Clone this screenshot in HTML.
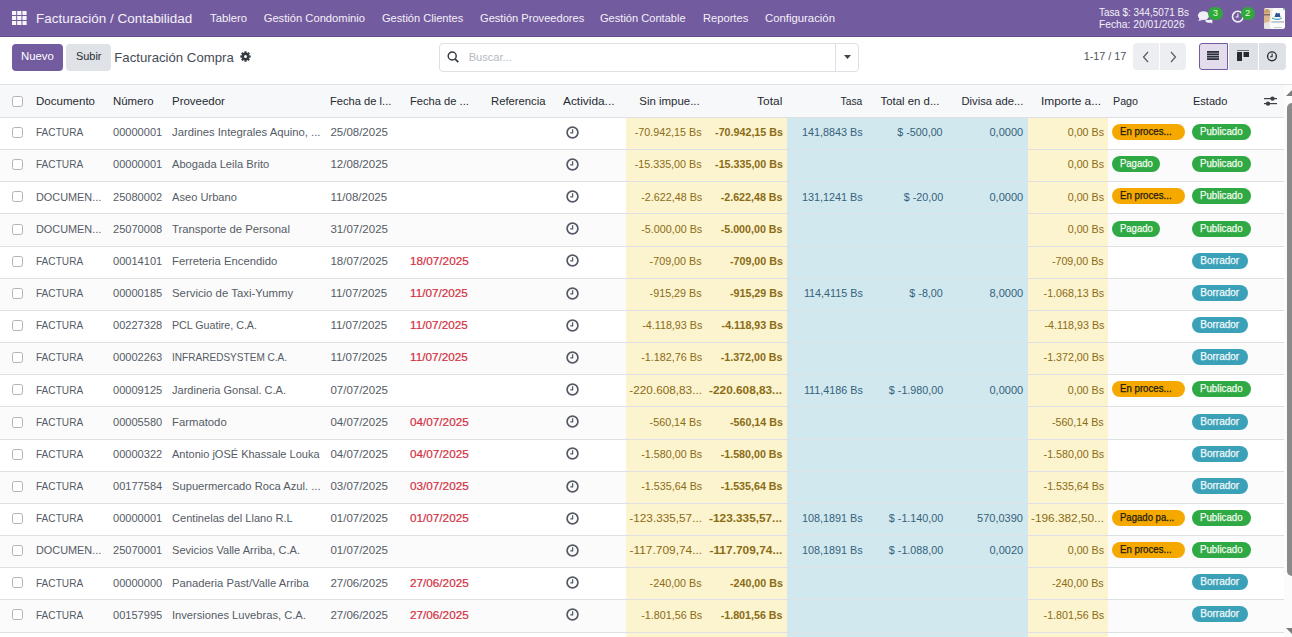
<!DOCTYPE html>
<html><head><meta charset="utf-8"><title>Facturación Compra</title>
<style>
*{box-sizing:border-box;margin:0;padding:0}
html,body{width:1292px;height:637px;overflow:hidden;background:#fff;font-family:"Liberation Sans",sans-serif;position:relative}
.t{position:absolute;white-space:nowrap}
.nav{position:absolute;left:0;top:0;width:1292px;height:37px;background:#735b9f;border-bottom:1px solid #5f4b86}
.nt{color:#f4f1f8}
.btn{position:absolute;border-radius:4px}
.hdr{position:absolute;left:0;top:84px;width:1292px;height:34px;border-top:1px solid #dde0e4;border-bottom:1px solid #dde0e4}
.hdrbg{position:absolute;left:0;top:85px;width:1284px;height:32px;background:#f7f8fa}
.ht{color:#252a31}
.row{position:absolute;left:0;width:1284px}
.rl{position:absolute;left:0;width:1284px;height:1px;background:#dde0e4}
.cb{position:absolute;left:12px;width:11px;height:11px;border:1px solid #b3b3b3;border-radius:2.5px;background:#fff}
.rt{color:#555b65}
.red{color:#d32f3f}
.yt{color:#8a6c14}
.bt{color:#34627a}
.badge{position:absolute;height:16px;border-radius:8px}
.bx{-webkit-text-stroke:0.25px currentColor}
.b-ot{color:#1d1a10}.b-gt{color:#f4fbef}.b-bt{color:#f2f9fb}
.b-o{background:#f5a900}
.b-g{background:#2fa944}
.b-b{background:#3aa1b8}
</style></head><body>

<div class="nav"></div><div style="position:absolute;left:0;top:35px;width:1292px;height:1px;background:#785fa4"></div>
<svg style="position:absolute;left:12px;top:11px" width="15" height="14" viewBox="0 0 15 14"><rect x="0.0" y="0.0" width="4.2" height="4" fill="#f7f5fb"/><rect x="0.0" y="5.0" width="4.2" height="4" fill="#f7f5fb"/><rect x="0.0" y="10.0" width="4.2" height="4" fill="#f7f5fb"/><rect x="5.2" y="0.0" width="4.2" height="4" fill="#f7f5fb"/><rect x="5.2" y="5.0" width="4.2" height="4" fill="#f7f5fb"/><rect x="5.2" y="10.0" width="4.2" height="4" fill="#f7f5fb"/><rect x="10.4" y="0.0" width="4.2" height="4" fill="#f7f5fb"/><rect x="10.4" y="5.0" width="4.2" height="4" fill="#f7f5fb"/><rect x="10.4" y="10.0" width="4.2" height="4" fill="#f7f5fb"/></svg>
<div class="t nt" style="left:36.00px;top:12.16px;font-size:13.4px;line-height:13.4px;transform:scaleX(1.0046);transform-origin:left center;">Facturación / Contabilidad</div>
<div class="t nt" style="left:210.00px;top:12.82px;font-size:11.2px;line-height:11.2px;transform:scaleX(1.0072);transform-origin:left center;">Tablero</div>
<div class="t nt" style="left:263.70px;top:12.82px;font-size:11.2px;line-height:11.2px;">Gestión Condominio</div>
<div class="t nt" style="left:381.50px;top:12.82px;font-size:11.2px;line-height:11.2px;transform:scaleX(0.9894);transform-origin:left center;">Gestión Clientes</div>
<div class="t nt" style="left:479.50px;top:12.82px;font-size:11.2px;line-height:11.2px;transform:scaleX(0.9923);transform-origin:left center;">Gestión Proveedores</div>
<div class="t nt" style="left:600.30px;top:12.82px;font-size:11.2px;line-height:11.2px;transform:scaleX(0.9903);transform-origin:left center;">Gestión Contable</div>
<div class="t nt" style="left:703.00px;top:12.82px;font-size:11.2px;line-height:11.2px;transform:scaleX(0.9967);transform-origin:left center;">Reportes</div>
<div class="t nt" style="left:764.70px;top:12.82px;font-size:11.2px;line-height:11.2px;transform:scaleX(1.0130);transform-origin:left center;">Configuración</div>
<div class="t nt" style="left:1099.00px;top:7.31px;font-size:10.5px;line-height:10.5px;transform:scaleX(0.9401);transform-origin:left center;">Tasa $: 344,5071 Bs</div>
<div class="t nt" style="left:1099.00px;top:18.91px;font-size:10.5px;line-height:10.5px;transform:scaleX(0.9775);transform-origin:left center;">Fecha: 20/01/2026</div>
<svg style="position:absolute;left:1196px;top:9px" width="18" height="15" viewBox="0 0 18 15"><path d="M9.5 10.6 C12 11.2 14.2 11 15.3 10.6 C16.6 11.3 17 12.4 16 13.2 L16.8 14.4 L14.4 13.7 C12.8 14.1 10.6 13.7 9.5 12.6Z" fill="#f1eef6"/><ellipse cx="7.5" cy="6.6" rx="5.6" ry="4.4" fill="#f1eef6"/><path d="M3.6 9.6 L2.3 12 L6.6 10.9Z" fill="#f1eef6"/></svg>
<div style="position:absolute;left:1208px;top:7px;width:14.6px;height:13.2px;border-radius:7px;background:#2ea93c;color:#eef5d4;font-size:9.5px;line-height:12px;text-align:center">3</div>
<svg style="position:absolute;left:1231px;top:10px" width="14" height="14" viewBox="0 0 14 14"><circle cx="6.8" cy="6.6" r="5.3" fill="none" stroke="#f1eef6" stroke-width="1.6"/><path d="M6.9 3.6V7H4.6" fill="none" stroke="#f1eef6" stroke-width="1.1"/></svg>
<div style="position:absolute;left:1240.5px;top:7px;width:14.4px;height:13.2px;border-radius:7px;background:#2ea93c;color:#eef5d4;font-size:9.5px;line-height:12px;text-align:center">2</div>
<svg style="position:absolute;left:1264px;top:8px" width="21" height="21" viewBox="0 0 21 21">
<defs><clipPath id="av"><rect width="21" height="21" rx="2.5"/></clipPath></defs>
<g clip-path="url(#av)">
<rect width="21" height="21" fill="#fbfbfc"/>
<path d="M0 0H9L5.5 21H0Z" fill="#ece9e6"/>
<path d="M0 3 C1 1 4 1 5.5 2.5 L6 5 L5.5 13 L3 16 L0 16Z" fill="#d9b48f"/>
<path d="M0 2.5 C1 0.5 5 0.5 6 3 L5.6 5 L0 5Z" fill="#c7a36a"/>
<rect x="0" y="6.2" width="6" height="1.2" fill="#6b5a4e"/>
<path d="M0 15 L4 14 L7 21 H0Z" fill="#e6e3e1"/>
<path d="M10.5 9 L12 4.8 L14 5.6 L15.5 4.8 L16.5 9Z" fill="#2d4f8e"/>
<path d="M8.5 9.5 Q13 12 18 9.5 L17 11 Q13 13 9.5 11Z" fill="#3b9ee0"/>
<rect x="8" y="9.8" width="2" height="1.2" fill="#5bc86a"/>
<rect x="15.8" y="9.8" width="2" height="1.2" fill="#5bc86a"/>
<rect x="7.5" y="13.5" width="12.5" height="0.9" fill="#8c8f96"/>
<rect x="10" y="19" width="8" height="0.7" fill="#b6b8bd"/>
<rect x="19" y="0.5" width="1.6" height="1.6" fill="#58d05f"/>
</g></svg>
<div class="btn" style="left:12px;top:44px;width:51px;height:27px;background:#735b9f"></div>
<div class="t " style="left:20.90px;top:51.03px;font-size:11.3px;line-height:11.3px;transform:scaleX(1.0071);transform-origin:left center;color:#fff">Nuevo</div>
<div class="btn" style="left:66px;top:44px;width:45px;height:27px;background:#dfe2e6"></div>
<div class="t " style="left:75.50px;top:51.03px;font-size:11.3px;line-height:11.3px;transform:scaleX(0.9664);transform-origin:left center;color:#262b33">Subir</div>
<div class="t " style="left:114.30px;top:50.83px;font-size:13.2px;line-height:13.2px;color:#454b55">Facturación Compra</div>
<svg style="position:absolute;left:239.7px;top:51.4px" width="11" height="11" viewBox="0 0 11 11"><g transform="translate(5.5 5.5)" fill="#363b44"><circle r="3.9"/><rect x="-1.1" y="-5.2" width="2.2" height="10.4"/><rect x="-1.1" y="-5.2" width="2.2" height="10.4" transform="rotate(45)"/><rect x="-1.1" y="-5.2" width="2.2" height="10.4" transform="rotate(90)"/><rect x="-1.1" y="-5.2" width="2.2" height="10.4" transform="rotate(135)"/></g><circle cx="5.5" cy="5.5" r="1.5" fill="#fff"/></svg>
<div style="position:absolute;left:439px;top:43px;width:420px;height:28.5px;border:1px solid #dde0e4;border-radius:4px;background:#fff"></div>
<div style="position:absolute;left:835px;top:43px;width:1px;height:28.5px;background:#dde0e4"></div>
<svg style="position:absolute;left:447px;top:51px" width="13" height="12" viewBox="0 0 13 12"><circle cx="5.2" cy="5" r="4" fill="none" stroke="#353a42" stroke-width="1.45"/><path d="M8 7.9L11.3 11.2" stroke="#353a42" stroke-width="1.7"/></svg>
<div class="t " style="left:468.70px;top:52.00px;font-size:11.1px;line-height:11.1px;color:#b4b9c2">Buscar...</div>
<svg style="position:absolute;left:843.5px;top:55px" width="7" height="4" viewBox="0 0 7 4"><path d="M0 0H7L3.5 4Z" fill="#3f444c"/></svg>
<div class="t " style="left:1083.70px;top:51.16px;font-size:10.8px;line-height:10.8px;color:#4d535c">1-17 / 17</div>
<div class="btn" style="left:1133px;top:43px;width:26px;height:27px;background:#eceef1;border-radius:4px 0 0 4px"></div>
<div class="btn" style="left:1160px;top:43px;width:26px;height:27px;background:#eceef1;border-radius:0 4px 4px 0"></div>
<svg style="position:absolute;left:1141px;top:51px" width="10" height="12" viewBox="0 0 10 12"><path d="M7 1L2.5 6L7 11" fill="none" stroke="#555b64" stroke-width="1.2"/></svg>
<svg style="position:absolute;left:1168px;top:51px" width="10" height="12" viewBox="0 0 10 12"><path d="M3 1L7.5 6L3 11" fill="none" stroke="#555b64" stroke-width="1.2"/></svg>
<div class="btn" style="left:1199px;top:43px;width:29px;height:27px;background:#e2dcec;border:1px solid #735b9f;border-radius:3px 0 0 3px"></div>
<div class="btn" style="left:1229px;top:43px;width:29px;height:27px;background:#dee1e6;border-radius:0"></div>
<div class="btn" style="left:1259px;top:43px;width:27px;height:27px;background:#dee1e6;border-radius:0 4px 4px 0"></div>
<svg style="position:absolute;left:1207.3px;top:51px" width="12" height="9" viewBox="0 0 12 9"><rect x="0" y="0" width="12" height="1.8" fill="#2a2f37"/><rect x="0" y="2.4" width="12" height="1.8" fill="#2a2f37"/><rect x="0" y="4.8" width="12" height="1.8" fill="#2a2f37"/><rect x="0" y="7.2" width="12" height="1.8" fill="#2a2f37"/></svg>
<svg style="position:absolute;left:1237px;top:50px" width="12" height="11" viewBox="0 0 12 11"><rect x="0" y="0" width="12" height="1" fill="#6a6f78"/><rect x="0" y="2" width="5" height="9" fill="#262b33"/><rect x="6.5" y="2" width="5.5" height="5" fill="#262b33"/></svg>
<svg style="position:absolute;left:1266px;top:51px" width="12" height="11" viewBox="0 0 12 11"><circle cx="6" cy="5.3" r="4.4" fill="none" stroke="#2a2f37" stroke-width="1.35"/><path d="M6.1 2.6V5.7H4" fill="none" stroke="#2a2f37" stroke-width="1.1"/></svg>
<div class="hdr"></div><div class="hdrbg"></div>
<div class="cb" style="top:96px"></div>
<div class="t ht" style="left:36.00px;top:96.27px;font-size:11.5px;line-height:11.5px;transform:scaleX(1.0032);transform-origin:left center;">Documento</div>
<div class="t ht" style="left:113.40px;top:96.27px;font-size:11.5px;line-height:11.5px;transform:scaleX(0.9925);transform-origin:left center;">Número</div>
<div class="t ht" style="left:171.70px;top:96.27px;font-size:11.5px;line-height:11.5px;transform:scaleX(0.9970);transform-origin:left center;">Proveedor</div>
<div class="t ht" style="left:330.40px;top:96.27px;font-size:11.5px;line-height:11.5px;transform:scaleX(0.9702);transform-origin:left center;">Fecha de l...</div>
<div class="t ht" style="left:410.40px;top:96.27px;font-size:11.5px;line-height:11.5px;transform:scaleX(0.9698);transform-origin:left center;">Fecha de ...</div>
<div class="t ht" style="left:490.90px;top:96.27px;font-size:11.5px;line-height:11.5px;transform:scaleX(0.9798);transform-origin:left center;">Referencia</div>
<div class="t ht" style="left:563.20px;top:96.27px;font-size:11.5px;line-height:11.5px;transform:scaleX(1.0330);transform-origin:left center;">Activida...</div>
<div class="t ht" style="left:1112.50px;top:96.27px;font-size:11.5px;line-height:11.5px;transform:scaleX(0.9310);transform-origin:left center;">Pago</div>
<div class="t ht" style="left:1192.60px;top:96.27px;font-size:11.5px;line-height:11.5px;transform:scaleX(0.9581);transform-origin:left center;">Estado</div>
<div class="t ht" style="right:592.30px;top:96.27px;font-size:11.5px;line-height:11.5px;transform:scaleX(0.9947);transform-origin:right center;">Sin impue...</div>
<div class="t ht" style="right:509.30px;top:96.27px;font-size:11.5px;line-height:11.5px;transform:scaleX(1.0375);transform-origin:right center;">Total</div>
<div class="t ht" style="right:429.30px;top:96.27px;font-size:11.5px;line-height:11.5px;transform:scaleX(0.8930);transform-origin:right center;">Tasa</div>
<div class="t ht" style="right:352.50px;top:96.27px;font-size:11.5px;line-height:11.5px;transform:scaleX(0.9907);transform-origin:right center;">Total en d...</div>
<div class="t ht" style="right:268.90px;top:96.27px;font-size:11.5px;line-height:11.5px;transform:scaleX(0.9767);transform-origin:right center;">Divisa ade...</div>
<div class="t ht" style="right:190.40px;top:96.27px;font-size:11.5px;line-height:11.5px;transform:scaleX(1.0350);transform-origin:right center;">Importe a...</div>
<svg style="position:absolute;left:1264px;top:95px" width="13" height="12" viewBox="0 0 13 12"><rect x="0" y="3" width="13" height="1.2" fill="#3a3f48"/><rect x="0" y="8" width="13" height="1.2" fill="#3a3f48"/><circle cx="8.5" cy="3.6" r="2.2" fill="#3a3f48"/><circle cx="4" cy="8.6" r="2.2" fill="#3a3f48"/></svg>
<div style="position:absolute;left:626px;top:118px;width:161px;height:519px;background:#fcf3cf"></div>
<div style="position:absolute;left:787px;top:118px;width:241px;height:519px;background:#d2e8ef"></div>
<div style="position:absolute;left:1028px;top:118px;width:80px;height:519px;background:#fcf3cf"></div>
<div class="rl" style="top:149px"></div>
<div class="cb" style="top:127px"></div>
<div class="t rt" style="left:36.00px;top:127.27px;font-size:11.5px;line-height:11.5px;transform:scaleX(0.8793);transform-origin:left center;">FACTURA</div>
<div class="t rt" style="left:113.00px;top:127.27px;font-size:11.5px;line-height:11.5px;transform:scaleX(0.9620);transform-origin:left center;">00000001</div>
<div class="t rt" style="left:172.00px;top:127.27px;font-size:11.5px;line-height:11.5px;transform:scaleX(0.9801);transform-origin:left center;">Jardines Integrales Aquino, ...</div>
<div class="t rt" style="left:330.40px;top:127.27px;font-size:11.5px;line-height:11.5px;">25/08/2025</div>
<div style="position:absolute;left:566px;top:125px;width:13px;height:13px"><svg width="13" height="13" viewBox="0 0 13 13"><circle cx="6.5" cy="6.5" r="5.4" fill="none" stroke="#545a64" stroke-width="1.7"/><path d="M6.6 3.3V6.9H4.3" fill="none" stroke="#545a64" stroke-width="1.3"/></svg></div>
<div class="t yt" style="right:590.00px;top:127.27px;font-size:11.5px;line-height:11.5px;transform:scaleX(0.9350);transform-origin:right center;">-70.942,15 Bs</div>
<div class="t yt" style="right:509.60px;top:127.27px;font-size:11.5px;line-height:11.5px;transform:scaleX(0.9300);transform-origin:right center;font-weight:bold">-70.942,15 Bs</div>
<div class="t bt" style="right:429.00px;top:127.27px;font-size:11.5px;line-height:11.5px;transform:scaleX(0.9380);transform-origin:right center;">141,8843 Bs</div>
<div class="t bt" style="right:349.00px;top:127.27px;font-size:11.5px;line-height:11.5px;transform:scaleX(0.9340);transform-origin:right center;">$ -500,00</div>
<div class="t bt" style="right:268.60px;top:127.27px;font-size:11.5px;line-height:11.5px;transform:scaleX(0.9580);transform-origin:right center;">0,0000</div>
<div class="t yt" style="right:188.00px;top:127.27px;font-size:11.5px;line-height:11.5px;transform:scaleX(0.9300);transform-origin:right center;">0,00 Bs</div>
<div class="badge b-o" style="left:1112px;top:124px;width:73px"></div>
<div class="t bx b-ot" style="left:1120.30px;top:127.23px;font-size:10px;line-height:10px;transform:scaleX(0.9670);transform-origin:left center;">En proces...</div>
<div class="badge b-g" style="left:1192px;top:124px;width:59px"></div>
<div class="t bx b-gt" style="left:1200.30px;top:127.23px;font-size:10px;line-height:10px;transform:scaleX(0.9699);transform-origin:left center;">Publicado</div>
<div class="row" style="top:150px;height:31px;background:#fbfbfc;left:0;width:626px"></div>
<div class="row" style="top:150px;height:31px;background:#fbfbfc;left:1108px;width:176px"></div>
<div class="rl" style="top:181px"></div>
<div class="cb" style="top:159px"></div>
<div class="t rt" style="left:36.00px;top:159.27px;font-size:11.5px;line-height:11.5px;transform:scaleX(0.8793);transform-origin:left center;">FACTURA</div>
<div class="t rt" style="left:113.00px;top:159.27px;font-size:11.5px;line-height:11.5px;transform:scaleX(0.9620);transform-origin:left center;">00000001</div>
<div class="t rt" style="left:172.00px;top:159.27px;font-size:11.5px;line-height:11.5px;transform:scaleX(0.9681);transform-origin:left center;">Abogada Leila Brito</div>
<div class="t rt" style="left:330.40px;top:159.27px;font-size:11.5px;line-height:11.5px;">12/08/2025</div>
<div style="position:absolute;left:566px;top:157px;width:13px;height:13px"><svg width="13" height="13" viewBox="0 0 13 13"><circle cx="6.5" cy="6.5" r="5.4" fill="none" stroke="#545a64" stroke-width="1.7"/><path d="M6.6 3.3V6.9H4.3" fill="none" stroke="#545a64" stroke-width="1.3"/></svg></div>
<div class="t yt" style="right:590.00px;top:159.27px;font-size:11.5px;line-height:11.5px;transform:scaleX(0.9350);transform-origin:right center;">-15.335,00 Bs</div>
<div class="t yt" style="right:509.60px;top:159.27px;font-size:11.5px;line-height:11.5px;transform:scaleX(0.9300);transform-origin:right center;font-weight:bold">-15.335,00 Bs</div>
<div class="t yt" style="right:188.00px;top:159.27px;font-size:11.5px;line-height:11.5px;transform:scaleX(0.9300);transform-origin:right center;">0,00 Bs</div>
<div class="badge b-g" style="left:1112px;top:156px;width:48px"></div>
<div class="t bx b-gt" style="left:1120.30px;top:159.23px;font-size:10px;line-height:10px;transform:scaleX(0.9498);transform-origin:left center;">Pagado</div>
<div class="badge b-g" style="left:1192px;top:156px;width:59px"></div>
<div class="t bx b-gt" style="left:1200.30px;top:159.23px;font-size:10px;line-height:10px;transform:scaleX(0.9699);transform-origin:left center;">Publicado</div>
<div class="rl" style="top:213px"></div>
<div class="cb" style="top:191px"></div>
<div class="t rt" style="left:36.00px;top:192.27px;font-size:11.5px;line-height:11.5px;transform:scaleX(0.9464);transform-origin:left center;">DOCUMEN...</div>
<div class="t rt" style="left:113.00px;top:192.27px;font-size:11.5px;line-height:11.5px;transform:scaleX(0.9620);transform-origin:left center;">25080002</div>
<div class="t rt" style="left:172.00px;top:192.27px;font-size:11.5px;line-height:11.5px;transform:scaleX(0.9662);transform-origin:left center;">Aseo Urbano</div>
<div class="t rt" style="left:330.40px;top:192.27px;font-size:11.5px;line-height:11.5px;">11/08/2025</div>
<div style="position:absolute;left:566px;top:189px;width:13px;height:13px"><svg width="13" height="13" viewBox="0 0 13 13"><circle cx="6.5" cy="6.5" r="5.4" fill="none" stroke="#545a64" stroke-width="1.7"/><path d="M6.6 3.3V6.9H4.3" fill="none" stroke="#545a64" stroke-width="1.3"/></svg></div>
<div class="t yt" style="right:590.00px;top:192.27px;font-size:11.5px;line-height:11.5px;transform:scaleX(0.9350);transform-origin:right center;">-2.622,48 Bs</div>
<div class="t yt" style="right:509.60px;top:192.27px;font-size:11.5px;line-height:11.5px;transform:scaleX(0.9300);transform-origin:right center;font-weight:bold">-2.622,48 Bs</div>
<div class="t bt" style="right:429.00px;top:192.27px;font-size:11.5px;line-height:11.5px;transform:scaleX(0.9380);transform-origin:right center;">131,1241 Bs</div>
<div class="t bt" style="right:349.00px;top:192.27px;font-size:11.5px;line-height:11.5px;transform:scaleX(0.9340);transform-origin:right center;">$ -20,00</div>
<div class="t bt" style="right:268.60px;top:192.27px;font-size:11.5px;line-height:11.5px;transform:scaleX(0.9580);transform-origin:right center;">0,0000</div>
<div class="t yt" style="right:188.00px;top:192.27px;font-size:11.5px;line-height:11.5px;transform:scaleX(0.9300);transform-origin:right center;">0,00 Bs</div>
<div class="badge b-o" style="left:1112px;top:188px;width:73px"></div>
<div class="t bx b-ot" style="left:1120.30px;top:191.23px;font-size:10px;line-height:10px;transform:scaleX(0.9670);transform-origin:left center;">En proces...</div>
<div class="badge b-g" style="left:1192px;top:188px;width:59px"></div>
<div class="t bx b-gt" style="left:1200.30px;top:191.23px;font-size:10px;line-height:10px;transform:scaleX(0.9699);transform-origin:left center;">Publicado</div>
<div class="row" style="top:214px;height:32px;background:#fbfbfc;left:0;width:626px"></div>
<div class="row" style="top:214px;height:32px;background:#fbfbfc;left:1108px;width:176px"></div>
<div class="rl" style="top:246px"></div>
<div class="cb" style="top:224px"></div>
<div class="t rt" style="left:36.00px;top:224.27px;font-size:11.5px;line-height:11.5px;transform:scaleX(0.9464);transform-origin:left center;">DOCUMEN...</div>
<div class="t rt" style="left:113.00px;top:224.27px;font-size:11.5px;line-height:11.5px;transform:scaleX(0.9620);transform-origin:left center;">25070008</div>
<div class="t rt" style="left:172.00px;top:224.27px;font-size:11.5px;line-height:11.5px;transform:scaleX(0.9845);transform-origin:left center;">Transporte de Personal</div>
<div class="t rt" style="left:330.40px;top:224.27px;font-size:11.5px;line-height:11.5px;">31/07/2025</div>
<div style="position:absolute;left:566px;top:221px;width:13px;height:13px"><svg width="13" height="13" viewBox="0 0 13 13"><circle cx="6.5" cy="6.5" r="5.4" fill="none" stroke="#545a64" stroke-width="1.7"/><path d="M6.6 3.3V6.9H4.3" fill="none" stroke="#545a64" stroke-width="1.3"/></svg></div>
<div class="t yt" style="right:590.00px;top:224.27px;font-size:11.5px;line-height:11.5px;transform:scaleX(0.9350);transform-origin:right center;">-5.000,00 Bs</div>
<div class="t yt" style="right:509.60px;top:224.27px;font-size:11.5px;line-height:11.5px;transform:scaleX(0.9300);transform-origin:right center;font-weight:bold">-5.000,00 Bs</div>
<div class="t yt" style="right:188.00px;top:224.27px;font-size:11.5px;line-height:11.5px;transform:scaleX(0.9300);transform-origin:right center;">0,00 Bs</div>
<div class="badge b-g" style="left:1112px;top:221px;width:48px"></div>
<div class="t bx b-gt" style="left:1120.30px;top:224.23px;font-size:10px;line-height:10px;transform:scaleX(0.9498);transform-origin:left center;">Pagado</div>
<div class="badge b-g" style="left:1192px;top:221px;width:59px"></div>
<div class="t bx b-gt" style="left:1200.30px;top:224.23px;font-size:10px;line-height:10px;transform:scaleX(0.9699);transform-origin:left center;">Publicado</div>
<div class="rl" style="top:278px"></div>
<div class="cb" style="top:256px"></div>
<div class="t rt" style="left:36.00px;top:256.27px;font-size:11.5px;line-height:11.5px;transform:scaleX(0.8793);transform-origin:left center;">FACTURA</div>
<div class="t rt" style="left:113.00px;top:256.27px;font-size:11.5px;line-height:11.5px;transform:scaleX(0.9620);transform-origin:left center;">00014101</div>
<div class="t rt" style="left:172.00px;top:256.27px;font-size:11.5px;line-height:11.5px;transform:scaleX(0.9804);transform-origin:left center;">Ferreteria Encendido</div>
<div class="t rt" style="left:330.40px;top:256.27px;font-size:11.5px;line-height:11.5px;">18/07/2025</div>
<div class="t red" style="left:410.40px;top:256.27px;font-size:11.5px;line-height:11.5px;transform:scaleX(1.0200);transform-origin:left center;-webkit-text-stroke:0.2px #d32f3f">18/07/2025</div>
<div style="position:absolute;left:566px;top:253px;width:13px;height:13px"><svg width="13" height="13" viewBox="0 0 13 13"><circle cx="6.5" cy="6.5" r="5.4" fill="none" stroke="#545a64" stroke-width="1.7"/><path d="M6.6 3.3V6.9H4.3" fill="none" stroke="#545a64" stroke-width="1.3"/></svg></div>
<div class="t yt" style="right:590.00px;top:256.27px;font-size:11.5px;line-height:11.5px;transform:scaleX(0.9350);transform-origin:right center;">-709,00 Bs</div>
<div class="t yt" style="right:509.60px;top:256.27px;font-size:11.5px;line-height:11.5px;transform:scaleX(0.9300);transform-origin:right center;font-weight:bold">-709,00 Bs</div>
<div class="t yt" style="right:188.00px;top:256.27px;font-size:11.5px;line-height:11.5px;transform:scaleX(0.9300);transform-origin:right center;">-709,00 Bs</div>
<div class="badge b-b" style="left:1192px;top:253px;width:56px"></div>
<div class="t bx b-bt" style="left:1200.30px;top:256.24px;font-size:10px;line-height:10px;">Borrador</div>
<div class="row" style="top:279px;height:31px;background:#fbfbfc;left:0;width:626px"></div>
<div class="row" style="top:279px;height:31px;background:#fbfbfc;left:1108px;width:176px"></div>
<div class="rl" style="top:310px"></div>
<div class="cb" style="top:288px"></div>
<div class="t rt" style="left:36.00px;top:288.27px;font-size:11.5px;line-height:11.5px;transform:scaleX(0.8793);transform-origin:left center;">FACTURA</div>
<div class="t rt" style="left:113.00px;top:288.27px;font-size:11.5px;line-height:11.5px;transform:scaleX(0.9620);transform-origin:left center;">00000185</div>
<div class="t rt" style="left:172.00px;top:288.27px;font-size:11.5px;line-height:11.5px;transform:scaleX(0.9887);transform-origin:left center;">Servicio de Taxi-Yummy</div>
<div class="t rt" style="left:330.40px;top:288.27px;font-size:11.5px;line-height:11.5px;">11/07/2025</div>
<div class="t red" style="left:410.40px;top:288.27px;font-size:11.5px;line-height:11.5px;transform:scaleX(1.0200);transform-origin:left center;-webkit-text-stroke:0.2px #d32f3f">11/07/2025</div>
<div style="position:absolute;left:566px;top:286px;width:13px;height:13px"><svg width="13" height="13" viewBox="0 0 13 13"><circle cx="6.5" cy="6.5" r="5.4" fill="none" stroke="#545a64" stroke-width="1.7"/><path d="M6.6 3.3V6.9H4.3" fill="none" stroke="#545a64" stroke-width="1.3"/></svg></div>
<div class="t yt" style="right:590.00px;top:288.27px;font-size:11.5px;line-height:11.5px;transform:scaleX(0.9350);transform-origin:right center;">-915,29 Bs</div>
<div class="t yt" style="right:509.60px;top:288.27px;font-size:11.5px;line-height:11.5px;transform:scaleX(0.9300);transform-origin:right center;font-weight:bold">-915,29 Bs</div>
<div class="t bt" style="right:429.00px;top:288.27px;font-size:11.5px;line-height:11.5px;transform:scaleX(0.9380);transform-origin:right center;">114,4115 Bs</div>
<div class="t bt" style="right:349.00px;top:288.27px;font-size:11.5px;line-height:11.5px;transform:scaleX(0.9340);transform-origin:right center;">$ -8,00</div>
<div class="t bt" style="right:268.60px;top:288.27px;font-size:11.5px;line-height:11.5px;transform:scaleX(0.9580);transform-origin:right center;">8,0000</div>
<div class="t yt" style="right:188.00px;top:288.27px;font-size:11.5px;line-height:11.5px;transform:scaleX(0.9300);transform-origin:right center;">-1.068,13 Bs</div>
<div class="badge b-b" style="left:1192px;top:285px;width:56px"></div>
<div class="t bx b-bt" style="left:1200.30px;top:288.24px;font-size:10px;line-height:10px;">Borrador</div>
<div class="rl" style="top:342px"></div>
<div class="cb" style="top:320px"></div>
<div class="t rt" style="left:36.00px;top:320.27px;font-size:11.5px;line-height:11.5px;transform:scaleX(0.8793);transform-origin:left center;">FACTURA</div>
<div class="t rt" style="left:113.00px;top:320.27px;font-size:11.5px;line-height:11.5px;transform:scaleX(0.9620);transform-origin:left center;">00227328</div>
<div class="t rt" style="left:172.00px;top:320.27px;font-size:11.5px;line-height:11.5px;transform:scaleX(0.9273);transform-origin:left center;">PCL Guatire, C.A.</div>
<div class="t rt" style="left:330.40px;top:320.27px;font-size:11.5px;line-height:11.5px;">11/07/2025</div>
<div class="t red" style="left:410.40px;top:320.27px;font-size:11.5px;line-height:11.5px;transform:scaleX(1.0200);transform-origin:left center;-webkit-text-stroke:0.2px #d32f3f">11/07/2025</div>
<div style="position:absolute;left:566px;top:318px;width:13px;height:13px"><svg width="13" height="13" viewBox="0 0 13 13"><circle cx="6.5" cy="6.5" r="5.4" fill="none" stroke="#545a64" stroke-width="1.7"/><path d="M6.6 3.3V6.9H4.3" fill="none" stroke="#545a64" stroke-width="1.3"/></svg></div>
<div class="t yt" style="right:590.00px;top:320.27px;font-size:11.5px;line-height:11.5px;transform:scaleX(0.9350);transform-origin:right center;">-4.118,93 Bs</div>
<div class="t yt" style="right:509.60px;top:320.27px;font-size:11.5px;line-height:11.5px;transform:scaleX(0.9300);transform-origin:right center;font-weight:bold">-4.118,93 Bs</div>
<div class="t yt" style="right:188.00px;top:320.27px;font-size:11.5px;line-height:11.5px;transform:scaleX(0.9300);transform-origin:right center;">-4.118,93 Bs</div>
<div class="badge b-b" style="left:1192px;top:317px;width:56px"></div>
<div class="t bx b-bt" style="left:1200.30px;top:320.24px;font-size:10px;line-height:10px;">Borrador</div>
<div class="row" style="top:343px;height:31px;background:#fbfbfc;left:0;width:626px"></div>
<div class="row" style="top:343px;height:31px;background:#fbfbfc;left:1108px;width:176px"></div>
<div class="rl" style="top:374px"></div>
<div class="cb" style="top:352px"></div>
<div class="t rt" style="left:36.00px;top:352.27px;font-size:11.5px;line-height:11.5px;transform:scaleX(0.8793);transform-origin:left center;">FACTURA</div>
<div class="t rt" style="left:113.00px;top:352.27px;font-size:11.5px;line-height:11.5px;transform:scaleX(0.9620);transform-origin:left center;">00002263</div>
<div class="t rt" style="left:172.00px;top:352.27px;font-size:11.5px;line-height:11.5px;transform:scaleX(0.8745);transform-origin:left center;">INFRAREDSYSTEM C.A.</div>
<div class="t rt" style="left:330.40px;top:352.27px;font-size:11.5px;line-height:11.5px;">11/07/2025</div>
<div class="t red" style="left:410.40px;top:352.27px;font-size:11.5px;line-height:11.5px;transform:scaleX(1.0200);transform-origin:left center;-webkit-text-stroke:0.2px #d32f3f">11/07/2025</div>
<div style="position:absolute;left:566px;top:350px;width:13px;height:13px"><svg width="13" height="13" viewBox="0 0 13 13"><circle cx="6.5" cy="6.5" r="5.4" fill="none" stroke="#545a64" stroke-width="1.7"/><path d="M6.6 3.3V6.9H4.3" fill="none" stroke="#545a64" stroke-width="1.3"/></svg></div>
<div class="t yt" style="right:590.00px;top:352.27px;font-size:11.5px;line-height:11.5px;transform:scaleX(0.9350);transform-origin:right center;">-1.182,76 Bs</div>
<div class="t yt" style="right:509.60px;top:352.27px;font-size:11.5px;line-height:11.5px;transform:scaleX(0.9300);transform-origin:right center;font-weight:bold">-1.372,00 Bs</div>
<div class="t yt" style="right:188.00px;top:352.27px;font-size:11.5px;line-height:11.5px;transform:scaleX(0.9300);transform-origin:right center;">-1.372,00 Bs</div>
<div class="badge b-b" style="left:1192px;top:349px;width:56px"></div>
<div class="t bx b-bt" style="left:1200.30px;top:352.24px;font-size:10px;line-height:10px;">Borrador</div>
<div class="rl" style="top:406px"></div>
<div class="cb" style="top:384px"></div>
<div class="t rt" style="left:36.00px;top:385.27px;font-size:11.5px;line-height:11.5px;transform:scaleX(0.8793);transform-origin:left center;">FACTURA</div>
<div class="t rt" style="left:113.00px;top:385.27px;font-size:11.5px;line-height:11.5px;transform:scaleX(0.9620);transform-origin:left center;">00009125</div>
<div class="t rt" style="left:172.00px;top:385.27px;font-size:11.5px;line-height:11.5px;transform:scaleX(0.9587);transform-origin:left center;">Jardineria Gonsal. C.A.</div>
<div class="t rt" style="left:330.40px;top:385.27px;font-size:11.5px;line-height:11.5px;">07/07/2025</div>
<div style="position:absolute;left:566px;top:382px;width:13px;height:13px"><svg width="13" height="13" viewBox="0 0 13 13"><circle cx="6.5" cy="6.5" r="5.4" fill="none" stroke="#545a64" stroke-width="1.7"/><path d="M6.6 3.3V6.9H4.3" fill="none" stroke="#545a64" stroke-width="1.3"/></svg></div>
<div class="t yt" style="right:590.00px;top:385.27px;font-size:11.5px;line-height:11.5px;transform:scaleX(1.0230);transform-origin:right center;">-220.608,83...</div>
<div class="t yt" style="right:509.60px;top:385.27px;font-size:11.5px;line-height:11.5px;transform:scaleX(1.0272);transform-origin:right center;font-weight:bold">-220.608,83...</div>
<div class="t bt" style="right:429.00px;top:385.27px;font-size:11.5px;line-height:11.5px;transform:scaleX(0.9380);transform-origin:right center;">111,4186 Bs</div>
<div class="t bt" style="right:349.00px;top:385.27px;font-size:11.5px;line-height:11.5px;transform:scaleX(0.9340);transform-origin:right center;">$ -1.980,00</div>
<div class="t bt" style="right:268.60px;top:385.27px;font-size:11.5px;line-height:11.5px;transform:scaleX(0.9580);transform-origin:right center;">0,0000</div>
<div class="t yt" style="right:188.00px;top:385.27px;font-size:11.5px;line-height:11.5px;transform:scaleX(0.9300);transform-origin:right center;">0,00 Bs</div>
<div class="badge b-o" style="left:1112px;top:381px;width:73px"></div>
<div class="t bx b-ot" style="left:1120.30px;top:384.24px;font-size:10px;line-height:10px;transform:scaleX(0.9670);transform-origin:left center;">En proces...</div>
<div class="badge b-g" style="left:1192px;top:381px;width:59px"></div>
<div class="t bx b-gt" style="left:1200.30px;top:384.24px;font-size:10px;line-height:10px;transform:scaleX(0.9699);transform-origin:left center;">Publicado</div>
<div class="row" style="top:407px;height:32px;background:#fbfbfc;left:0;width:626px"></div>
<div class="row" style="top:407px;height:32px;background:#fbfbfc;left:1108px;width:176px"></div>
<div class="rl" style="top:439px"></div>
<div class="cb" style="top:417px"></div>
<div class="t rt" style="left:36.00px;top:417.27px;font-size:11.5px;line-height:11.5px;transform:scaleX(0.8793);transform-origin:left center;">FACTURA</div>
<div class="t rt" style="left:113.00px;top:417.27px;font-size:11.5px;line-height:11.5px;transform:scaleX(0.9620);transform-origin:left center;">00005580</div>
<div class="t rt" style="left:172.00px;top:417.27px;font-size:11.5px;line-height:11.5px;transform:scaleX(0.9835);transform-origin:left center;">Farmatodo</div>
<div class="t rt" style="left:330.40px;top:417.27px;font-size:11.5px;line-height:11.5px;">04/07/2025</div>
<div class="t red" style="left:410.40px;top:417.27px;font-size:11.5px;line-height:11.5px;transform:scaleX(1.0200);transform-origin:left center;-webkit-text-stroke:0.2px #d32f3f">04/07/2025</div>
<div style="position:absolute;left:566px;top:414px;width:13px;height:13px"><svg width="13" height="13" viewBox="0 0 13 13"><circle cx="6.5" cy="6.5" r="5.4" fill="none" stroke="#545a64" stroke-width="1.7"/><path d="M6.6 3.3V6.9H4.3" fill="none" stroke="#545a64" stroke-width="1.3"/></svg></div>
<div class="t yt" style="right:590.00px;top:417.27px;font-size:11.5px;line-height:11.5px;transform:scaleX(0.9350);transform-origin:right center;">-560,14 Bs</div>
<div class="t yt" style="right:509.60px;top:417.27px;font-size:11.5px;line-height:11.5px;transform:scaleX(0.9300);transform-origin:right center;font-weight:bold">-560,14 Bs</div>
<div class="t yt" style="right:188.00px;top:417.27px;font-size:11.5px;line-height:11.5px;transform:scaleX(0.9300);transform-origin:right center;">-560,14 Bs</div>
<div class="badge b-b" style="left:1192px;top:414px;width:56px"></div>
<div class="t bx b-bt" style="left:1200.30px;top:417.24px;font-size:10px;line-height:10px;">Borrador</div>
<div class="rl" style="top:471px"></div>
<div class="cb" style="top:449px"></div>
<div class="t rt" style="left:36.00px;top:449.27px;font-size:11.5px;line-height:11.5px;transform:scaleX(0.8793);transform-origin:left center;">FACTURA</div>
<div class="t rt" style="left:113.00px;top:449.27px;font-size:11.5px;line-height:11.5px;transform:scaleX(0.9620);transform-origin:left center;">00000322</div>
<div class="t rt" style="left:172.00px;top:449.27px;font-size:11.5px;line-height:11.5px;transform:scaleX(0.9574);transform-origin:left center;">Antonio jOSÉ Khassale Louka</div>
<div class="t rt" style="left:330.40px;top:449.27px;font-size:11.5px;line-height:11.5px;">04/07/2025</div>
<div class="t red" style="left:410.40px;top:449.27px;font-size:11.5px;line-height:11.5px;transform:scaleX(1.0200);transform-origin:left center;-webkit-text-stroke:0.2px #d32f3f">04/07/2025</div>
<div style="position:absolute;left:566px;top:446px;width:13px;height:13px"><svg width="13" height="13" viewBox="0 0 13 13"><circle cx="6.5" cy="6.5" r="5.4" fill="none" stroke="#545a64" stroke-width="1.7"/><path d="M6.6 3.3V6.9H4.3" fill="none" stroke="#545a64" stroke-width="1.3"/></svg></div>
<div class="t yt" style="right:590.00px;top:449.27px;font-size:11.5px;line-height:11.5px;transform:scaleX(0.9350);transform-origin:right center;">-1.580,00 Bs</div>
<div class="t yt" style="right:509.60px;top:449.27px;font-size:11.5px;line-height:11.5px;transform:scaleX(0.9300);transform-origin:right center;font-weight:bold">-1.580,00 Bs</div>
<div class="t yt" style="right:188.00px;top:449.27px;font-size:11.5px;line-height:11.5px;transform:scaleX(0.9300);transform-origin:right center;">-1.580,00 Bs</div>
<div class="badge b-b" style="left:1192px;top:446px;width:56px"></div>
<div class="t bx b-bt" style="left:1200.30px;top:449.24px;font-size:10px;line-height:10px;">Borrador</div>
<div class="row" style="top:472px;height:31px;background:#fbfbfc;left:0;width:626px"></div>
<div class="row" style="top:472px;height:31px;background:#fbfbfc;left:1108px;width:176px"></div>
<div class="rl" style="top:503px"></div>
<div class="cb" style="top:481px"></div>
<div class="t rt" style="left:36.00px;top:481.27px;font-size:11.5px;line-height:11.5px;transform:scaleX(0.8793);transform-origin:left center;">FACTURA</div>
<div class="t rt" style="left:113.00px;top:481.27px;font-size:11.5px;line-height:11.5px;transform:scaleX(0.9620);transform-origin:left center;">00177584</div>
<div class="t rt" style="left:172.00px;top:481.27px;font-size:11.5px;line-height:11.5px;transform:scaleX(0.9720);transform-origin:left center;">Supuermercado Roca Azul. ...</div>
<div class="t rt" style="left:330.40px;top:481.27px;font-size:11.5px;line-height:11.5px;">03/07/2025</div>
<div class="t red" style="left:410.40px;top:481.27px;font-size:11.5px;line-height:11.5px;transform:scaleX(1.0200);transform-origin:left center;-webkit-text-stroke:0.2px #d32f3f">03/07/2025</div>
<div style="position:absolute;left:566px;top:479px;width:13px;height:13px"><svg width="13" height="13" viewBox="0 0 13 13"><circle cx="6.5" cy="6.5" r="5.4" fill="none" stroke="#545a64" stroke-width="1.7"/><path d="M6.6 3.3V6.9H4.3" fill="none" stroke="#545a64" stroke-width="1.3"/></svg></div>
<div class="t yt" style="right:590.00px;top:481.27px;font-size:11.5px;line-height:11.5px;transform:scaleX(0.9350);transform-origin:right center;">-1.535,64 Bs</div>
<div class="t yt" style="right:509.60px;top:481.27px;font-size:11.5px;line-height:11.5px;transform:scaleX(0.9300);transform-origin:right center;font-weight:bold">-1.535,64 Bs</div>
<div class="t yt" style="right:188.00px;top:481.27px;font-size:11.5px;line-height:11.5px;transform:scaleX(0.9300);transform-origin:right center;">-1.535,64 Bs</div>
<div class="badge b-b" style="left:1192px;top:478px;width:56px"></div>
<div class="t bx b-bt" style="left:1200.30px;top:481.24px;font-size:10px;line-height:10px;">Borrador</div>
<div class="rl" style="top:535px"></div>
<div class="cb" style="top:513px"></div>
<div class="t rt" style="left:36.00px;top:513.27px;font-size:11.5px;line-height:11.5px;transform:scaleX(0.8793);transform-origin:left center;">FACTURA</div>
<div class="t rt" style="left:113.00px;top:513.27px;font-size:11.5px;line-height:11.5px;transform:scaleX(0.9620);transform-origin:left center;">00000001</div>
<div class="t rt" style="left:172.00px;top:513.27px;font-size:11.5px;line-height:11.5px;transform:scaleX(0.9636);transform-origin:left center;">Centinelas del Llano R.L</div>
<div class="t rt" style="left:330.40px;top:513.27px;font-size:11.5px;line-height:11.5px;">01/07/2025</div>
<div class="t red" style="left:410.40px;top:513.27px;font-size:11.5px;line-height:11.5px;transform:scaleX(1.0200);transform-origin:left center;-webkit-text-stroke:0.2px #d32f3f">01/07/2025</div>
<div style="position:absolute;left:566px;top:511px;width:13px;height:13px"><svg width="13" height="13" viewBox="0 0 13 13"><circle cx="6.5" cy="6.5" r="5.4" fill="none" stroke="#545a64" stroke-width="1.7"/><path d="M6.6 3.3V6.9H4.3" fill="none" stroke="#545a64" stroke-width="1.3"/></svg></div>
<div class="t yt" style="right:590.00px;top:513.27px;font-size:11.5px;line-height:11.5px;transform:scaleX(1.0230);transform-origin:right center;">-123.335,57...</div>
<div class="t yt" style="right:509.60px;top:513.27px;font-size:11.5px;line-height:11.5px;transform:scaleX(1.0272);transform-origin:right center;font-weight:bold">-123.335,57...</div>
<div class="t bt" style="right:429.00px;top:513.27px;font-size:11.5px;line-height:11.5px;transform:scaleX(0.9380);transform-origin:right center;">108,1891 Bs</div>
<div class="t bt" style="right:349.00px;top:513.27px;font-size:11.5px;line-height:11.5px;transform:scaleX(0.9340);transform-origin:right center;">$ -1.140,00</div>
<div class="t bt" style="right:268.60px;top:513.27px;font-size:11.5px;line-height:11.5px;transform:scaleX(0.9580);transform-origin:right center;">570,0390</div>
<div class="t yt" style="right:188.00px;top:513.27px;font-size:11.5px;line-height:11.5px;transform:scaleX(1.0287);transform-origin:right center;">-196.382,50...</div>
<div class="badge b-o" style="left:1112px;top:510px;width:73px"></div>
<div class="t bx b-ot" style="left:1120.30px;top:513.24px;font-size:10px;line-height:10px;transform:scaleX(0.9557);transform-origin:left center;">Pagado pa...</div>
<div class="badge b-g" style="left:1192px;top:510px;width:59px"></div>
<div class="t bx b-gt" style="left:1200.30px;top:513.24px;font-size:10px;line-height:10px;transform:scaleX(0.9699);transform-origin:left center;">Publicado</div>
<div class="row" style="top:536px;height:31px;background:#fbfbfc;left:0;width:626px"></div>
<div class="row" style="top:536px;height:31px;background:#fbfbfc;left:1108px;width:176px"></div>
<div class="rl" style="top:567px"></div>
<div class="cb" style="top:545px"></div>
<div class="t rt" style="left:36.00px;top:545.27px;font-size:11.5px;line-height:11.5px;transform:scaleX(0.9464);transform-origin:left center;">DOCUMEN...</div>
<div class="t rt" style="left:113.00px;top:545.27px;font-size:11.5px;line-height:11.5px;transform:scaleX(0.9620);transform-origin:left center;">25070001</div>
<div class="t rt" style="left:172.00px;top:545.27px;font-size:11.5px;line-height:11.5px;transform:scaleX(0.9646);transform-origin:left center;">Sevicios Valle Arriba, C.A.</div>
<div class="t rt" style="left:330.40px;top:545.27px;font-size:11.5px;line-height:11.5px;">01/07/2025</div>
<div style="position:absolute;left:566px;top:543px;width:13px;height:13px"><svg width="13" height="13" viewBox="0 0 13 13"><circle cx="6.5" cy="6.5" r="5.4" fill="none" stroke="#545a64" stroke-width="1.7"/><path d="M6.6 3.3V6.9H4.3" fill="none" stroke="#545a64" stroke-width="1.3"/></svg></div>
<div class="t yt" style="right:590.00px;top:545.27px;font-size:11.5px;line-height:11.5px;transform:scaleX(1.0354);transform-origin:right center;">-117.709,74...</div>
<div class="t yt" style="right:509.60px;top:545.27px;font-size:11.5px;line-height:11.5px;transform:scaleX(1.0365);transform-origin:right center;font-weight:bold">-117.709,74...</div>
<div class="t bt" style="right:429.00px;top:545.27px;font-size:11.5px;line-height:11.5px;transform:scaleX(0.9380);transform-origin:right center;">108,1891 Bs</div>
<div class="t bt" style="right:349.00px;top:545.27px;font-size:11.5px;line-height:11.5px;transform:scaleX(0.9340);transform-origin:right center;">$ -1.088,00</div>
<div class="t bt" style="right:268.60px;top:545.27px;font-size:11.5px;line-height:11.5px;transform:scaleX(0.9580);transform-origin:right center;">0,0020</div>
<div class="t yt" style="right:188.00px;top:545.27px;font-size:11.5px;line-height:11.5px;transform:scaleX(0.9300);transform-origin:right center;">0,00 Bs</div>
<div class="badge b-o" style="left:1112px;top:542px;width:73px"></div>
<div class="t bx b-ot" style="left:1120.30px;top:545.24px;font-size:10px;line-height:10px;transform:scaleX(0.9670);transform-origin:left center;">En proces...</div>
<div class="badge b-g" style="left:1192px;top:542px;width:59px"></div>
<div class="t bx b-gt" style="left:1200.30px;top:545.24px;font-size:10px;line-height:10px;transform:scaleX(0.9699);transform-origin:left center;">Publicado</div>
<div class="rl" style="top:599px"></div>
<div class="cb" style="top:577px"></div>
<div class="t rt" style="left:36.00px;top:578.27px;font-size:11.5px;line-height:11.5px;transform:scaleX(0.8793);transform-origin:left center;">FACTURA</div>
<div class="t rt" style="left:113.00px;top:578.27px;font-size:11.5px;line-height:11.5px;transform:scaleX(0.9620);transform-origin:left center;">00000000</div>
<div class="t rt" style="left:172.00px;top:578.27px;font-size:11.5px;line-height:11.5px;transform:scaleX(0.9781);transform-origin:left center;">Panaderia Past/Valle Arriba</div>
<div class="t rt" style="left:330.40px;top:578.27px;font-size:11.5px;line-height:11.5px;">27/06/2025</div>
<div class="t red" style="left:410.40px;top:578.27px;font-size:11.5px;line-height:11.5px;transform:scaleX(1.0200);transform-origin:left center;-webkit-text-stroke:0.2px #d32f3f">27/06/2025</div>
<div style="position:absolute;left:566px;top:575px;width:13px;height:13px"><svg width="13" height="13" viewBox="0 0 13 13"><circle cx="6.5" cy="6.5" r="5.4" fill="none" stroke="#545a64" stroke-width="1.7"/><path d="M6.6 3.3V6.9H4.3" fill="none" stroke="#545a64" stroke-width="1.3"/></svg></div>
<div class="t yt" style="right:590.00px;top:578.27px;font-size:11.5px;line-height:11.5px;transform:scaleX(0.9350);transform-origin:right center;">-240,00 Bs</div>
<div class="t yt" style="right:509.60px;top:578.27px;font-size:11.5px;line-height:11.5px;transform:scaleX(0.9300);transform-origin:right center;font-weight:bold">-240,00 Bs</div>
<div class="t yt" style="right:188.00px;top:578.27px;font-size:11.5px;line-height:11.5px;transform:scaleX(0.9300);transform-origin:right center;">-240,00 Bs</div>
<div class="badge b-b" style="left:1192px;top:574px;width:56px"></div>
<div class="t bx b-bt" style="left:1200.30px;top:577.24px;font-size:10px;line-height:10px;">Borrador</div>
<div class="row" style="top:600px;height:32px;background:#fbfbfc;left:0;width:626px"></div>
<div class="row" style="top:600px;height:32px;background:#fbfbfc;left:1108px;width:176px"></div>
<div class="rl" style="top:632px"></div>
<div class="cb" style="top:609px"></div>
<div class="t rt" style="left:36.00px;top:610.27px;font-size:11.5px;line-height:11.5px;transform:scaleX(0.8793);transform-origin:left center;">FACTURA</div>
<div class="t rt" style="left:113.00px;top:610.27px;font-size:11.5px;line-height:11.5px;transform:scaleX(0.9620);transform-origin:left center;">00157995</div>
<div class="t rt" style="left:172.00px;top:610.27px;font-size:11.5px;line-height:11.5px;transform:scaleX(0.9693);transform-origin:left center;">Inversiones Luvebras, C.A.</div>
<div class="t rt" style="left:330.40px;top:610.27px;font-size:11.5px;line-height:11.5px;">27/06/2025</div>
<div class="t red" style="left:410.40px;top:610.27px;font-size:11.5px;line-height:11.5px;transform:scaleX(1.0200);transform-origin:left center;-webkit-text-stroke:0.2px #d32f3f">27/06/2025</div>
<div style="position:absolute;left:566px;top:607px;width:13px;height:13px"><svg width="13" height="13" viewBox="0 0 13 13"><circle cx="6.5" cy="6.5" r="5.4" fill="none" stroke="#545a64" stroke-width="1.7"/><path d="M6.6 3.3V6.9H4.3" fill="none" stroke="#545a64" stroke-width="1.3"/></svg></div>
<div class="t yt" style="right:590.00px;top:610.27px;font-size:11.5px;line-height:11.5px;transform:scaleX(0.9350);transform-origin:right center;">-1.801,56 Bs</div>
<div class="t yt" style="right:509.60px;top:610.27px;font-size:11.5px;line-height:11.5px;transform:scaleX(0.9300);transform-origin:right center;font-weight:bold">-1.801,56 Bs</div>
<div class="t yt" style="right:188.00px;top:610.27px;font-size:11.5px;line-height:11.5px;transform:scaleX(0.9300);transform-origin:right center;">-1.801,56 Bs</div>
<div class="badge b-b" style="left:1192px;top:606px;width:56px"></div>
<div class="t bx b-bt" style="left:1200.30px;top:609.24px;font-size:10px;line-height:10px;">Borrador</div>
<div style="position:absolute;left:1284px;top:85px;width:8px;height:552px;background:#fbfbfb"></div>
<svg style="position:absolute;left:1286px;top:90px" width="6" height="6" viewBox="0 0 6 6"><path d="M0 6L6 0V6Z" fill="#7c7c7c"/></svg>
<div style="position:absolute;left:1287px;top:103px;width:10px;height:473px;border-radius:5px;background:#8a8a8a"></div>
<svg style="position:absolute;left:1286px;top:628px" width="6" height="6" viewBox="0 0 6 6"><path d="M0 0H6V6Z" fill="#7c7c7c"/></svg>
</body></html>
